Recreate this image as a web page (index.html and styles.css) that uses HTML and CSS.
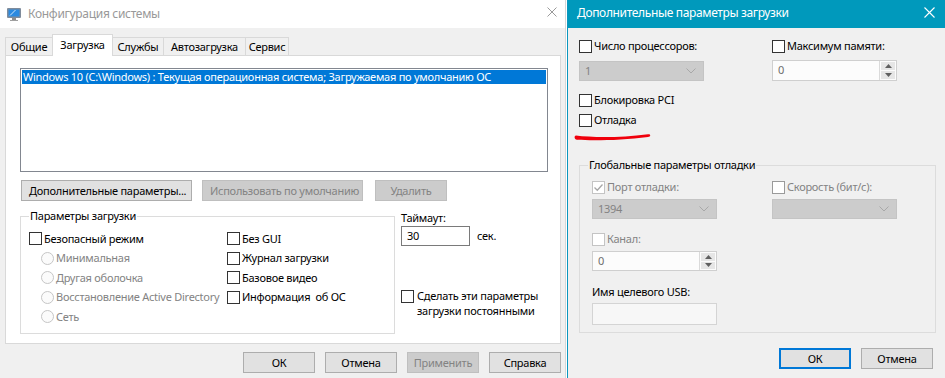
FILE: index.html
```html
<!DOCTYPE html>
<html lang="ru">
<head>
    <meta charset="UTF-8">
    <meta name="viewport" content="width=device-width, initial-scale=1.0">
    <title>Конфигурация системы</title>
    <link rel="stylesheet" href="styles.css">
</head>
<body>
<div class="desk">

    <!-- msconfig window -->
    <div class="main">
        <div class="titlebar">
            <svg class="app-icon" width="16" height="16" viewBox="0 0 16 16">
                <rect x="1" y="2" width="14" height="10" rx="1" fill="#7f8c9c"/>
                <rect x="2.5" y="3.5" width="11" height="7" fill="#2b8ae0"/>
                <path d="M4 9.5 L9.5 4" stroke="#cfe6fb" stroke-width="1"/>
                <rect x="6" y="12" width="4" height="2" fill="#8d8d8d"/>
                <rect x="4" y="14" width="8" height="1" fill="#a0a0a0"/>
            </svg>
            <span class="title">Конфигурация системы</span>
            <svg class="close" width="10" height="10" viewBox="0 0 10 10">
                <path d="M0.5 0.5 L9.5 9.5 M9.5 0.5 L0.5 9.5" stroke="#9a9a9a" stroke-width="1"/>
            </svg>
        </div>

        <div class="win-body">
            <div class="tabs">
                <div class="tab tab-general">Общие</div>
                <div class="tab tab-boot active">Загрузка</div>
                <div class="tab tab-services">Службы</div>
                <div class="tab tab-startup">Автозагрузка</div>
                <div class="tab tab-tools">Сервис</div>
            </div>

            <div class="panel">
                <div class="listbox">
                    <div class="list-item selected">Windows 10 (C:\Windows) : Текущая операционная система; Загружаемая по умолчанию ОС</div>
                </div>

                <div class="btn-row">
                    <button class="btn btn-adv">Дополнительные параметры...</button>
                    <button class="btn btn-def" disabled>Использовать по умолчанию</button>
                    <button class="btn btn-del" disabled>Удалить</button>
                </div>

                <div class="boot-row">
                    <fieldset class="group boot-opts">
                        <legend>Параметры загрузки</legend>
                        <div class="opt-cols">
                            <div class="opt-col-left">
                                <div class="opt"><span class="cb"></span>Безопасный режим</div>
                                <div class="opt sub dim"><span class="rb"></span>Минимальная</div>
                                <div class="opt sub dim"><span class="rb"></span>Другая оболочка</div>
                                <div class="opt sub dim"><span class="rb"></span>Восстановление Active Directory</div>
                                <div class="opt sub dim"><span class="rb"></span>Сеть</div>
                            </div>
                            <div class="opt-col-right">
                                <div class="opt"><span class="cb"></span>Без GUI</div>
                                <div class="opt"><span class="cb"></span>Журнал загрузки</div>
                                <div class="opt"><span class="cb"></span>Базовое видео</div>
                                <div class="opt"><span class="cb"></span>Информация&nbsp; об ОС</div>
                            </div>
                        </div>
                    </fieldset>

                    <div class="timeout">
                        <div class="label">Таймаут:</div>
                        <div class="timeout-line">
                            <div class="edit">30</div>
                            <span>сек.</span>
                        </div>
                        <div class="persist">
                            <span class="cb"></span>
                            <div class="persist-text">
                                <div>Сделать эти параметры</div>
                                <div>загрузки постоянными</div>
                            </div>
                        </div>
                    </div>
                </div>
            </div>

            <div class="dlg-buttons">
                <button class="btn btn-fixed">ОК</button>
                <button class="btn btn-fixed">Отмена</button>
                <button class="btn btn-fixed" disabled>Применить</button>
                <button class="btn btn-fixed">Справка</button>
            </div>
        </div>
    </div>

    <!-- advanced boot options dialog -->
    <div class="dlg">
        <div class="dlg-title">
            <span class="title">Дополнительные параметры загрузки</span>
            <svg class="close" width="11" height="11" viewBox="0 0 11 11">
                <path d="M0.5 0.5 L10.5 10.5 M10.5 0.5 L0.5 10.5" stroke="#fff" stroke-width="1.1"/>
            </svg>
        </div>

        <div class="dlg-body">
            <div class="dcols">
                <div class="dcol">
                    <div class="opt"><span class="cb"></span>Число процессоров:</div>
                    <div class="combo combo-top"><span>1</span><svg width="10" height="6" viewBox="0 0 10 6"><path d="M0.5 0.5 L5 5 L9.5 0.5" fill="none" stroke="#a8a8a8"/></svg></div>
                </div>
                <div class="dcol">
                    <div class="opt"><span class="cb"></span>Максимум памяти:</div>
                    <div class="spin spin-top">
                        <span class="spin-val">0</span>
                        <span class="spin-btns">
                            <span class="spin-btn"><svg width="7" height="4" viewBox="0 0 7 4"><path d="M0 4 L3.5 0 L7 4 Z" fill="#606060"/></svg></span>
                            <span class="spin-btn"><svg width="7" height="4" viewBox="0 0 7 4"><path d="M0 0 L3.5 4 L7 0 Z" fill="#606060"/></svg></span>
                        </span>
                    </div>
                </div>
            </div>

            <div class="opt opt-pci"><span class="cb"></span>Блокировка PCI</div>
            <div class="opt opt-debug"><span class="cb"></span>Отладка</div>
            <svg class="marker" width="78" height="10" viewBox="0 0 78 10">
                <path d="M2 4.5 C 18 6.5, 45 7, 74 3.2 C 77 3, 77 5.5, 74 6 C 48 9.5, 18 9.8, 3 8.8 C 0 8.5, 0 4.5, 2 4.5 Z" fill="#f0000c"/>
            </svg>

            <fieldset class="group debug-group">
                <legend>Глобальные параметры отладки</legend>
                <div class="debug-inner">
                    <div class="dcols">
                        <div class="dcol-in">
                            <div class="opt dim"><span class="cb cb-dim checked"><svg width="11" height="11" viewBox="0 0 11 11"><path d="M1.5 5.5 L4.3 8.3 L9.5 2.5" fill="none" stroke="#a6a6a6" stroke-width="1.3"/></svg></span>Порт отладки:</div>
                            <div class="combo combo-in"><span>1394</span><svg width="10" height="6" viewBox="0 0 10 6"><path d="M0.5 0.5 L5 5 L9.5 0.5" fill="none" stroke="#a8a8a8"/></svg></div>
                        </div>
                        <div class="dcol-in">
                            <div class="opt dim"><span class="cb cb-mid"></span>Скорость (бит/с):</div>
                            <div class="combo combo-in"><span></span><svg width="10" height="6" viewBox="0 0 10 6"><path d="M0.5 0.5 L5 5 L9.5 0.5" fill="none" stroke="#a8a8a8"/></svg></div>
                        </div>
                    </div>

                    <div class="opt dim opt-channel"><span class="cb cb-dim"></span>Канал:</div>
                    <div class="spin spin-in">
                        <span class="spin-val">0</span>
                        <span class="spin-btns">
                            <span class="spin-btn"><svg width="7" height="4" viewBox="0 0 7 4"><path d="M0 4 L3.5 0 L7 4 Z" fill="#606060"/></svg></span>
                            <span class="spin-btn"><svg width="7" height="4" viewBox="0 0 7 4"><path d="M0 0 L3.5 4 L7 0 Z" fill="#606060"/></svg></span>
                        </span>
                    </div>

                    <div class="usb-label">Имя целевого USB:</div>
                    <div class="usb-edit"></div>
                </div>
            </fieldset>

            <div class="dlg-actions">
                <button class="btn btn-fixed btn-default">ОК</button>
                <button class="btn btn-fixed">Отмена</button>
            </div>
        </div>
    </div>

</div>
</body>
</html>
```
FILE: styles.css
```css
* {
    margin: 0;
    padding: 0;
    box-sizing: border-box;
}
body {
    width: 945px;
    height: 378px;
    overflow: hidden;
    background: #fff;
    font-family: "Noto Sans", "Open Sans", sans-serif;
    font-size: 11px;
    letter-spacing: -0.26px;
    line-height: 16px;
    color: #000;
}
.desk {
    display: flex;
    height: 378px;
}

/* ---------- main window ---------- */
.main {
    width: 566px;
    height: 378px;
    background: #f0f0f0;
    border-right: 1px solid #d6d6d6;
    display: flex;
    flex-direction: column;
}
.titlebar {
    height: 28px;
    background: #fff;
    display: flex;
    align-items: center;
    padding: 0 8px 0 6px;
}
.titlebar .title {
    font-size: 12px;
    letter-spacing: -0.3px;
    color: #999;
    margin-left: 6px;
    margin-top: -1px;
    flex: 1;
}
.titlebar .close {
    margin-top: -4px;
}
.win-body {
    padding: 0 4px 0 5px;
    flex: 1;
}
.tabs {
    height: 27px;
    display: flex;
    align-items: flex-end;
}
.tab {
    height: 18px;
    border: 1px solid #d9d9d9;
    border-bottom: none;
    margin-left: -1px;
    background: #f0f0f0;
    display: flex;
    align-items: center;
    justify-content: center;
}
.tab:first-child {
    margin-left: 0;
}
.tab-general { width: 48px; }
.tab-boot { width: 61px; }
.tab-services { width: 52px; }
.tab-startup { width: 83px; }
.tab-tools { width: 44px; }
.tab.active {
    height: 22px;
    margin-bottom: -1px;
    background: #fff;
    position: relative;
    z-index: 1;
    padding-bottom: 2px;
}
.panel {
    height: 289px;
    background: #fff;
    border: 1px solid #d9d9d9;
    padding: 12px 12px 0 14px;
}
.listbox {
    height: 104px;
    border: 1px solid #828790;
    padding: 1px;
}
.list-item {
    height: 14px;
    line-height: 14px;
    padding-left: 1px;
    white-space: nowrap;
    overflow: hidden;
}
.list-item.selected {
    background: #0078d7;
    color: #fff;
}

.btn {
    height: 21px;
    padding: 0 7px;
    font: inherit;
    letter-spacing: inherit;
    color: #000;
    background: #e1e1e1;
    border: 1px solid #adadad;
    white-space: nowrap;
}
.btn:disabled {
    background: #cccccc;
    border-color: #bfbfbf;
    color: #838383;
}
.btn-fixed {
    width: 72px;
    padding: 0;
}
.btn-default {
    border: 2px solid #0078d7;
}
.btn-row {
    margin-top: 8px;
    display: flex;
    padding-left: 1px;
}
.btn-adv {
    width: 171px;
}
.btn-def {
    width: 161px;
    margin-left: 10px;
}
.btn-del {
    width: 72px;
    margin-left: 12px;
}

.boot-row {
    margin-top: 7px;
    display: flex;
}
.group {
    border: 1px solid #dcdcdc;
    min-width: 0;
}
.group legend {
    padding: 0 1px;
}
.boot-opts {
    width: 375px;
    padding: 5px 8px 6px 8px;
}
.opt-cols {
    display: flex;
}
.opt-col-left {
    width: 198px;
    flex: none;
}
.opt {
    height: 19.5px;
    display: flex;
    align-items: center;
    white-space: nowrap;
}
.opt.sub {
    padding-left: 12px;
}
.dim {
    color: #838383;
}
.cb {
    width: 13px;
    height: 13px;
    border: 1px solid #333;
    background: #fff;
    margin-right: 2px;
    flex: none;
    display: flex;
    align-items: center;
    justify-content: center;
}
.cb-dim {
    border-color: #c4c4c4;
}
.cb-mid {
    border-color: #9a9a9a;
}
.rb {
    width: 13px;
    height: 13px;
    border: 1px solid #c6c6c6;
    border-radius: 50%;
    background: #fbfbfb;
    margin-right: 2px;
    flex: none;
}

.timeout {
    margin-left: 6px;
    padding-top: 2px;
}
.timeout-line {
    display: flex;
    align-items: center;
    gap: 7px;
}
.edit {
    width: 69px;
    height: 20px;
    border: 1px solid #7a7a7a;
    background: #fff;
    padding-left: 5px;
    line-height: 18px;
}
.persist {
    margin-top: 44px;
    display: flex;
    align-items: flex-start;
}
.persist .cb {
    margin-right: 3px;
}
.persist-text {
    line-height: 15px;
    margin-top: -2px;
}

.dlg-buttons {
    margin-top: 8px;
    display: flex;
    justify-content: flex-end;
    gap: 10px;
}

/* ---------- advanced options dialog ---------- */
.dlg {
    width: 378px;
    margin-left: 1px;
    height: 378px;
    background: #f0f0f0;
    border-left: 1px solid #0a97bf;
    display: flex;
    flex-direction: column;
}
.dlg-title {
    height: 28px;
    background: #0099bc;
    color: #fff;
    display: flex;
    align-items: center;
    padding: 0 10px 0 9px;
}
.dlg-title .title {
    flex: 1;
    font-size: 12px;
    letter-spacing: -0.35px;
    margin-top: -3px;
}
.dlg-title .close {
    margin-top: -4px;
}
.dlg-body {
    position: relative;
    padding: 10px 9px 0 11px;
}
.dcols {
    display: flex;
}
.dcol {
    width: 193px;
    flex: none;
}
.dcol-in {
    width: 180px;
    flex: none;
}
.dcols .opt,
.opt-pci,
.opt-debug,
.opt-channel {
    height: 16px;
}
.combo {
    width: 125px;
    height: 20px;
    background: #cccccc;
    border: 1px solid #c4c4c4;
    color: #838383;
    display: flex;
    align-items: center;
    justify-content: space-between;
    padding: 0 7px 0 5px;
}
.combo-top {
    margin-top: 7px;
}
.combo-in {
    margin-top: 4px;
}
.spin {
    width: 125px;
    height: 21px;
    border: 1px solid #cfcfcf;
    background: #fcfcfc;
    display: flex;
}
.spin-top {
    margin-top: 6px;
}
.spin-val {
    flex: 1;
    padding-left: 5px;
    line-height: 18px;
    color: #6d6d6d;
}
.spin-btns {
    width: 17px;
    display: flex;
    flex-direction: column;
    gap: 1px;
    padding: 1px;
    border-left: 1px solid #dadada;
}
.spin-btn {
    flex: 1;
    background: #e6e6e6;
    display: flex;
    align-items: center;
    justify-content: center;
}
.opt-pci {
    margin-top: 11px;
}
.opt-debug {
    margin-top: 4px;
}
.marker {
    position: absolute;
    left: 6px;
    top: 103px;
}
.debug-group {
    margin-top: 29px;
    padding: 6px 8px 7px 8px;
}
.debug-inner {
    padding-left: 4px;
}
.opt-channel {
    margin-top: 12px;
}
.spin-in {
    margin-top: 4px;
    height: 20px;
}
.usb-label {
    margin-top: 13px;
}
.usb-edit {
    margin-top: 3px;
    width: 125px;
    height: 22px;
    background: #f7f7f7;
    border: 1px solid #d4d4d4;
}
.dlg-actions {
    margin-top: 15px;
    padding-right: 3px;
    display: flex;
    justify-content: flex-end;
    gap: 10px;
}
```
